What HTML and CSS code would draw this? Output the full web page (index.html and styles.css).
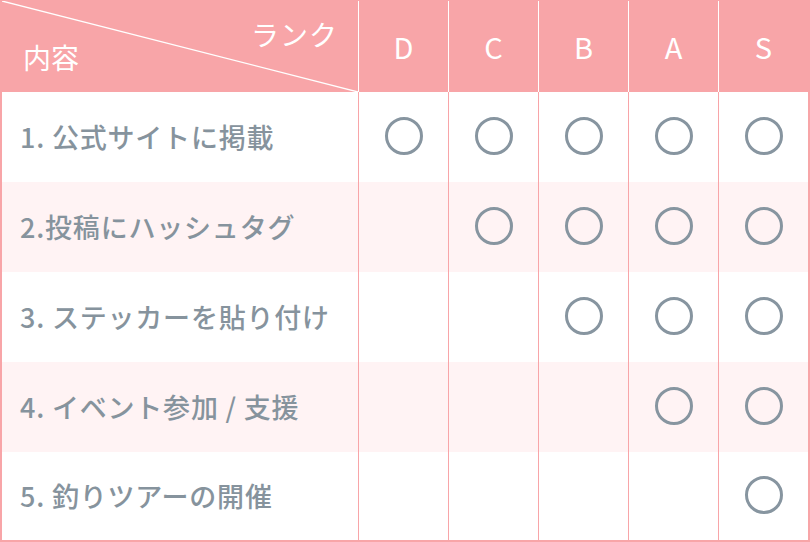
FILE: index.html
```html
<!DOCTYPE html>
<html lang="ja">
<head>
<meta charset="utf-8">
<link rel="stylesheet" href="styles.css">
</head>
<body>
<div class="table">
  <div class="hcell corner">
    <svg class="diag" width="356" height="91" viewBox="0 0 356 91" preserveAspectRatio="none"><line x1="0" y1="0" x2="356" y2="91" stroke="#fff" stroke-width="1.3"/></svg>
    <span class="rank">ランク</span>
    <span class="content">内容</span>
  </div>
  <div class="hcell rk">D</div>
  <div class="hcell rk">C</div>
  <div class="hcell rk">B</div>
  <div class="hcell rk">A</div>
  <div class="hcell rk">S</div>

  <div class="label">1. 公式サイトに掲載</div>
  <div class="cell"><span class="mark"></span></div>
  <div class="cell"><span class="mark"></span></div>
  <div class="cell"><span class="mark"></span></div>
  <div class="cell"><span class="mark"></span></div>
  <div class="cell"><span class="mark"></span></div>

  <div class="label alt">2.投稿にハッシュタグ</div>
  <div class="cell alt"></div>
  <div class="cell alt"><span class="mark"></span></div>
  <div class="cell alt"><span class="mark"></span></div>
  <div class="cell alt"><span class="mark"></span></div>
  <div class="cell alt"><span class="mark"></span></div>

  <div class="label">3. ステッカーを貼り付け</div>
  <div class="cell"></div>
  <div class="cell"></div>
  <div class="cell"><span class="mark"></span></div>
  <div class="cell"><span class="mark"></span></div>
  <div class="cell"><span class="mark"></span></div>

  <div class="label alt">4. イベント参加 / 支援</div>
  <div class="cell alt"></div>
  <div class="cell alt"></div>
  <div class="cell alt"></div>
  <div class="cell alt"><span class="mark"></span></div>
  <div class="cell alt"><span class="mark"></span></div>

  <div class="label">5. 釣りツアーの開催</div>
  <div class="cell"></div>
  <div class="cell"></div>
  <div class="cell"></div>
  <div class="cell"></div>
  <div class="cell"><span class="mark"></span></div>
</div>
</body>
</html>
```

FILE: styles.css
```css
html, body {
  margin: 0;
  padding: 0;
  background: #fff;
}
body {
  font-family: "Noto Sans CJK JP", "Noto Sans", sans-serif;
}
.table {
  width: 810px;
  height: 542px;
  box-sizing: border-box;
  display: grid;
  grid-template-columns: 356px repeat(5, 90px);
  grid-template-rows: 91px 90px 90px 90px 90px 88px;
  border-top: 1px solid #f8a5a8;
  border-left: 2px solid #f8a5a8;
  border-right: 2px solid #f8a5a8;
  border-bottom: 2px solid #f8a5a8;
}
.hcell {
  background: #f8a5a8;
  color: #fff;
  position: relative;
}
.rk {
  border-left: 1px solid #fff;
  display: flex;
  align-items: center;
  justify-content: center;
  font-size: 29px;
  font-weight: 400;
  padding-bottom: 2px;
}
.corner {
  overflow: hidden;
}
.diag {
  position: absolute;
  left: 0;
  top: 0;
}
.rank {
  position: absolute;
  right: 20px;
  top: 19px;
  font-size: 28px;
  line-height: 1;
  letter-spacing: 1px;
}
.content {
  position: absolute;
  left: 21px;
  top: 42px;
  font-size: 28px;
  line-height: 1;
}
.label {
  display: flex;
  align-items: center;
  padding-left: 18px;
  font-size: 27px;
  font-weight: 500;
  color: #86939d;
  letter-spacing: 0.8px;
  padding-bottom: 2px;
}
.cell {
  border-left: 1px solid #f8a5a8;
  display: flex;
  align-items: center;
  justify-content: center;
}
.alt {
  background: #fff3f4;
}
.mark {
  width: 32px;
  height: 32px;
  border: 3px solid #8795a0;
  border-radius: 50%;
  box-sizing: content-box;
  margin-top: -2px;
}
```
